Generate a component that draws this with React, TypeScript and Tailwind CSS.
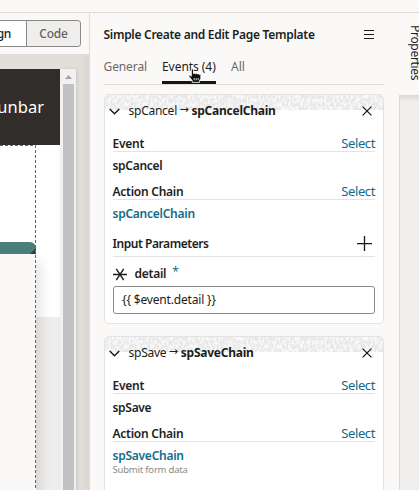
import React from "react";

const Chevron = () => (
  <svg className="h-[7px] w-[11px] shrink-0" viewBox="0 0 11 7" fill="none" stroke="#201e1c" strokeWidth="1.5">
    <path d="M.7 1 5.5 5.7 10.3 1" />
  </svg>
);
const Close = () => (
  <svg className="size-[10px] shrink-0" viewBox="0 0 10 10" stroke="#201e1c" strokeWidth="1.3">
    <path d="M.6.6 9.4 9.4M9.4.6.6 9.4" />
  </svg>
);
const Plus = () => (
  <svg className="size-[15px] shrink-0" viewBox="0 0 15 15" stroke="#161513" strokeWidth="1.3">
    <path d="M0 7.6h15M7.5 0v15" />
  </svg>
);

function Grain({ id }: { id: string }) {
  return (
    <svg className="absolute inset-x-0 top-0 h-[15px] w-full" preserveAspectRatio="none">
      <filter id={id} x="0" y="0" width="100%" height="100%" colorInterpolationFilters="sRGB">
        <feTurbulence type="fractalNoise" baseFrequency=".5 .25" numOctaves="2" seed="8" />
        <feColorMatrix values="0 0 0 0 .91  0 0 0 0 .91  0 0 0 0 .91  5 0 0 0 -1.9" />
      </filter>
      <rect width="100%" height="15" fill="#f9f9f9" />
      <rect width="100%" height="15" filter={`url(#${id})`} />
    </svg>
  );
}

function Row({ label }: { label: string }) {
  return (
    <div className="flex h-[17px] items-center justify-between border-b border-[#e4e3e3] pt-[2px]">
      <span className="-ml-[0.5px] text-[12px] font-semibold tracking-[-0.25px]">{label}</span>
      <span className="text-[13px] tracking-[-0.4px] text-[#116b89]">Select</span>
    </div>
  );
}

function Parameters() {
  return (
    <div className="flex h-[30px] items-center justify-between border-b border-[#e4e3e3] pt-[4px]">
      <span className="-ml-[0.5px] text-[12px] font-semibold tracking-[-0.45px]">Input Parameters</span>
      <span className="mr-[3px]"><Plus /></span>
    </div>
  );
}

function Card({ name, chain, children }: { name: string; chain: string; children: React.ReactNode }) {
  return (
    <section className="relative shrink-0 overflow-hidden rounded-[5px] border border-[#e4e3e3] bg-white px-2">
      <Grain id={name} />
      <div className="relative -ml-[4px] flex h-[32px] items-center">
        <Chevron />
        <div className="ml-[8.5px] flex flex-1 items-center text-[12px] tracking-[-0.25px]">
          <span>{name}</span>
          <span className="mx-[2.5px] -mt-px w-[9px] font-['DejaVu_Sans'] text-[11px]">→</span>
          <b className="ml-[0.5px] font-bold tracking-[-0.25px]">{chain}</b>
        </div>
        <span className="mr-[3.5px]"><Close /></span>
      </div>
      <div className="mt-[8px]"><Row label="Event" /></div>
      <div className="-ml-[0.5px] flex h-[31px] items-center pb-[4px] text-[12px] font-semibold tracking-[-0.3px]">{name}</div>
      <Row label="Action Chain" />
      {children}
    </section>
  );
}

export default function App() {
  return (
    <div className="flex h-[490px] w-[419px] flex-col overflow-hidden bg-[#fbf9f8] font-['Noto_Sans','Open_Sans',sans-serif] text-[#201e1c]">
      <div className="h-[13px] shrink-0 border-b border-[#dfddda]" />
      <div className="flex min-h-0 flex-1">
        <div className="flex w-[90px] shrink-0 flex-col overflow-hidden border-r border-[#dfddda]">
          <div className="flex h-[41px] shrink-0 items-center">
            <div className="flex h-[27px] w-[81px] overflow-hidden rounded-r-[4px] border border-l-0 border-[#8b8986] text-[12px] font-medium">
              <div className="flex w-[26px] items-center justify-end bg-white pr-[15px] tracking-[-0.3px]">Design</div>
              <div className="flex flex-1 items-center justify-center border-l border-[#8b8986] bg-[#efeeec] tracking-[-0.2px] text-[#65625f]">Code</div>
            </div>
          </div>
          <div className="flex min-h-0 flex-1 border-t border-[#dfddda] bg-[#e2deda] bg-[linear-gradient(90deg,#e2deda_78px,#e0dcd6_82px,#dad6d1_89px)] pt-[14px]">
            <div className="flex w-[60px] shrink-0 flex-col bg-[#efeeed]">
              <div className="flex h-[76px] shrink-0 items-center justify-end bg-[#312d2a] pr-4 text-[16.5px] text-white">Dunbar</div>
              <div className="flex min-h-0 flex-1 bg-[linear-gradient(#fff_172px,#efeeed_172px)]">
                <div className="relative z-10 w-[36px] shrink-0">
                  <div className="h-[97px] bg-white" />
                  <div className="relative h-[12px] overflow-hidden rounded-tr-[6px] bg-[#4b7d79]">
                    <svg className="absolute bottom-0 right-0 size-[6px]"><path d="M0 6 6 0v6z" fill="#27413f" /></svg>
                  </div>
                  <div className="h-[240px] bg-[#fbf9f8] shadow-[3px_8px_13px_rgba(0,0,0,0.14)]" />
                  <svg className="absolute inset-0 h-full w-full" fill="none" stroke="#227e9e" strokeDasharray="3 2">
                    <path d="M0 .5H35.5V345" />
                  </svg>
                </div>
              </div>
            </div>
            <div className="relative z-10 flex w-4 shrink-0 flex-col items-center bg-[#f1f1f1] shadow-[1px_0_3px_rgba(0,0,0,0.12)]">
              <svg className="h-[15px] w-full shrink-0"><path d="m5 10 3.5-4 3.5 4z" fill="#a3a3a3" /></svg>
              <div className="ml-px w-[11px] flex-1 bg-[#c1c1c1]" />
            </div>
          </div>
        </div>

        <div className="flex w-[309px] shrink-0 flex-col overflow-hidden pl-[14px] pr-[15px]">
          <header className="flex h-[43px] items-center justify-between">
            <h1 className="-ml-[0.5px] whitespace-nowrap text-[12px] font-semibold tracking-[-0.29px]">Simple Create and Edit Page Template</h1>
            <svg className="mr-[10px] h-[11px] w-[10px]" stroke="#201e1c"><path d="M0 1.5h10M0 5.5h10M0 9.5h10" /></svg>
          </header>
          <nav className="flex h-[29px] shrink-0 border-b border-[#dfddda] text-[12px] text-[#6b6865]">
            <span className="-ml-[0.5px] w-[58.5px] pt-[2px] tracking-[-0.1px]">General</span>
            <span className="relative h-[28px] w-[54px] whitespace-nowrap border-b-[3px] border-[#161513] pt-[2px] tracking-[-0.05px] text-[#201e1c]">
              Events (4)
              <svg className="absolute left-[26px] top-[12px] h-[15px] w-[14px]" viewBox="0 0 14 15" fill="#111" stroke="white" strokeWidth=".8">
                <path d="M3.5 1q1.8-.8 2 1v3.7q1-.8 1.8 0 1-.8 2 .2 1-.6 1.8.5 1.7-.4 1.7 1.2v3l-1.2 2v1.8H4.2v-1.7L1.1 8.5q-.7-1.6.7-1.5l1.5 1.2z" />
                <path d="M6.2 10v2.2M8.2 10v2.2M10.2 10v2.2" />
              </svg>
            </span>
            <span className="ml-[15px] pt-[2px]">All</span>
          </nav>
          <main className="flex min-h-0 flex-1 flex-col gap-[12px] pt-[9px]">
            <Card name="spCancel" chain="spCancelChain">
              <div className="-ml-[0.5px] flex h-[27px] items-center text-[12px] font-semibold tracking-[-0.25px] text-[#116b89]">spCancelChain</div>
              <Parameters />
              <div className="mt-[5px] flex h-[24px] items-center">
                <svg className="h-[13px] w-[14px]" viewBox="0 0 14 13" stroke="#201e1c" strokeWidth="1.4"><path d="M0 6.5h14M3.3.8l7.4 11.4M10.7.8 3.3 12.2" /></svg>
                <span className="ml-[7.5px] text-[12px] font-semibold tracking-[-0.25px]">detail</span>
                <span className="-mt-[5px] ml-[6px] text-[12px] text-[#116b89]">*</span>
              </div>
              <div className="mb-[9px] flex h-[28px] items-center rounded-[3px] border border-[#8b8986] px-[8px] text-[12px] tracking-[-0.17px]">{"{{ $event.detail }}"}</div>
            </Card>
            <Card name="spSave" chain="spSaveChain">
              <div className="-ml-[0.5px] flex h-[27px] items-center text-[12px] font-semibold tracking-[-0.25px] text-[#116b89]">spSaveChain</div>
              <div className="-mt-[6px] -ml-[0.5px] h-[22px] text-[9.5px] tracking-[-0.2px] text-[#8b8986]">Submit form data</div>
              <Parameters />
            </Card>
          </main>
        </div>

        <aside className="flex w-5 shrink-0 flex-col overflow-hidden">
          <div className="flex h-[82px] shrink-0 pl-[8px] pt-[12px]">
            <span className="whitespace-nowrap text-[12px] leading-[16px] tracking-[-0.3px] [writing-mode:vertical-rl]">Properties</span>
          </div>
          <div className="flex-1 border-l border-t border-[#dcdad8] bg-[#f0efee] shadow-[inset_0_5px_5px_-3px_rgba(0,0,0,0.1)]" />
        </aside>
      </div>
    </div>
  );
}
